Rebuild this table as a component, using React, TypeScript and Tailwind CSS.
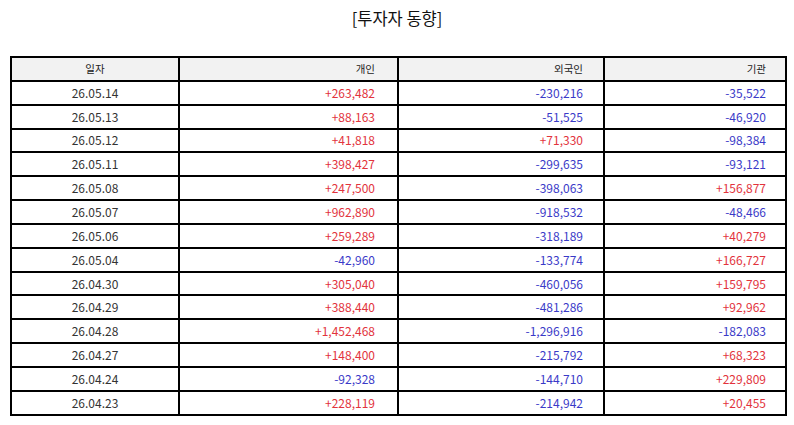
import React from 'react';

type Row = { date: string; indiv: string; foreign: string; inst: string };

const rows: Row[] = [
  { date: '26.05.14', indiv: '+263,482', foreign: '-230,216', inst: '-35,522' },
  { date: '26.05.13', indiv: '+88,163', foreign: '-51,525', inst: '-46,920' },
  { date: '26.05.12', indiv: '+41,818', foreign: '+71,330', inst: '-98,384' },
  { date: '26.05.11', indiv: '+398,427', foreign: '-299,635', inst: '-93,121' },
  { date: '26.05.08', indiv: '+247,500', foreign: '-398,063', inst: '+156,877' },
  { date: '26.05.07', indiv: '+962,890', foreign: '-918,532', inst: '-48,466' },
  { date: '26.05.06', indiv: '+259,289', foreign: '-318,189', inst: '+40,279' },
  { date: '26.05.04', indiv: '-42,960', foreign: '-133,774', inst: '+166,727' },
  { date: '26.04.30', indiv: '+305,040', foreign: '-460,056', inst: '+159,795' },
  { date: '26.04.29', indiv: '+388,440', foreign: '-481,286', inst: '+92,962' },
  { date: '26.04.28', indiv: '+1,452,468', foreign: '-1,296,916', inst: '-182,083' },
  { date: '26.04.27', indiv: '+148,400', foreign: '-215,792', inst: '+68,323' },
  { date: '26.04.24', indiv: '-92,328', foreign: '-144,710', inst: '+229,809' },
  { date: '26.04.23', indiv: '+228,119', foreign: '-214,942', inst: '+20,455' },
];

// 양수는 빨강, 음수는 파랑
function tone(v: string) {
  return v.startsWith('-') ? 'text-[#3a3ac8]' : 'text-[#e2333c]';
}

export default function App() {
  return (
    <div className="w-[794px] h-[425px] bg-white font-['Noto_Sans_CJK_KR','Noto_Sans',sans-serif] text-[#333]">
      <h1 className="pt-[5px] text-center text-[16.5px] leading-[26px] text-[#111]">[투자자 동향]</h1>
      <div className="pt-[25px] pl-[10px]">
        <table className="w-[775px] table-fixed border-collapse border-2 border-black text-[12px] leading-[16px]">
          <colgroup>
            <col className="w-[168px]" />
            <col className="w-[219px]" />
            <col className="w-[206px]" />
            <col className="w-[182px]" />
          </colgroup>
          <thead>
            <tr className="h-[23.85px] bg-[#f2f2f2] text-[10.5px] text-[#222]">
              <th className="border-2 border-black font-normal text-center">일자</th>
              <th className="border-2 border-black font-normal text-right pr-[22px]">개인</th>
              <th className="border-2 border-black font-normal text-right pr-[20px]">외국인</th>
              <th className="border-2 border-black font-normal text-right pr-[19px]">기관</th>
            </tr>
          </thead>
          <tbody>
            {rows.map((r) => (
              <tr key={r.date} className="h-[23.85px]">
                <td className="border-2 border-black text-center">{r.date}</td>
                <td className={`border-2 border-black text-right pr-[22px] ${tone(r.indiv)}`}>{r.indiv}</td>
                <td className={`border-2 border-black text-right pr-[20px] ${tone(r.foreign)}`}>{r.foreign}</td>
                <td className={`border-2 border-black text-right pr-[19px] ${tone(r.inst)}`}>{r.inst}</td>
              </tr>
            ))}
          </tbody>
        </table>
      </div>
    </div>
  );
}
